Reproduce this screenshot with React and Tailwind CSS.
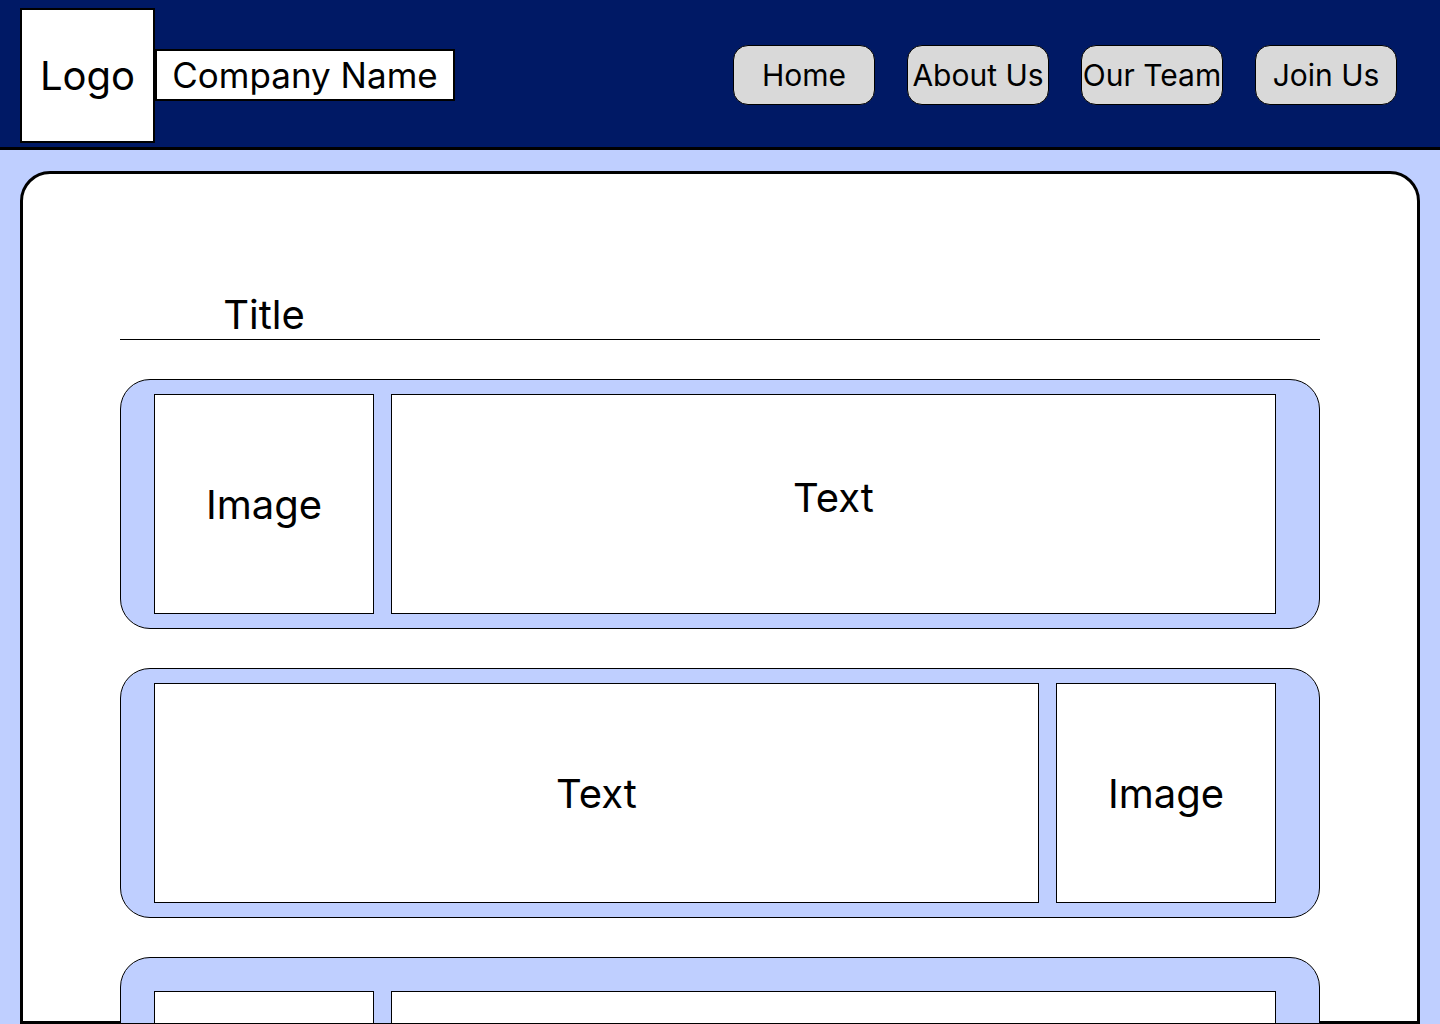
const navItems = ["Home", "About Us", "Our Team", "Join Us"];

function ImageBox() {
  return (
    <div className="flex h-[220px] w-[220px] shrink-0 items-center justify-center border border-black bg-white pt-0.5">
      Image
    </div>
  );
}

function TextBox({ className = "pt-0.5" }) {
  return (
    <div className={`flex h-[220px] flex-1 items-center justify-center border border-black bg-white ${className}`}>
      Text
    </div>
  );
}

function Card({ children }) {
  return (
    <section className="flex gap-[17px] rounded-[30px] border border-black bg-[#bfcfff] py-[14px] pr-[43px] pl-[33px]">
      {children}
    </section>
  );
}

export default function App() {
  return (
    <div className="min-h-screen bg-[#bfcfff] font-['Inter',sans-serif] text-[40px] leading-[48px] text-black">
      <header className="flex min-h-[150px] items-center justify-between border-b-3 border-black bg-[#001965] pt-[3px] pr-[43px] pl-5">
        <div className="flex items-center">
          <div className="flex size-[135px] items-center justify-center border-2 border-black bg-white pt-0.5">
            Logo
          </div>
          <div className="flex h-[52px] w-[300px] items-center justify-center border-2 border-black bg-white text-[35px] leading-[42px]">
            Company Name
          </div>
        </div>
        <nav className="flex gap-8">
          {navItems.map((label) => (
            <button
              key={label}
              type="button"
              className="flex h-[60px] w-[142px] items-center justify-center rounded-[15px] border border-black bg-[#d9d9d9] text-3xl whitespace-nowrap"
            >
              {label}
            </button>
          ))}
        </nav>
      </header>

      <main className="px-5 pt-[21px]">
        <div className="rounded-t-[30px] border-3 border-black bg-white px-[97px] pt-[117px]">
          <div className="border-b border-black pl-[34px]">
            <h1 className="w-[220px] text-center">Title</h1>
          </div>
          <div className="mt-[39px] flex flex-col gap-[39px]">
            <Card>
              <ImageBox />
              <TextBox className="pb-[13px]" />
            </Card>
            <Card>
              <TextBox />
              <ImageBox />
            </Card>
            <section className="-mb-[3px] flex gap-[17px] rounded-t-[30px] border border-black bg-[#bfcfff] pt-[33px] pr-[43px] pl-[33px]">
              <div className="h-8 w-[220px] shrink-0 border border-b-0 border-black bg-white" />
              <div className="h-8 flex-1 border border-b-0 border-black bg-white" />
            </section>
          </div>
        </div>
      </main>
    </div>
  );
}
